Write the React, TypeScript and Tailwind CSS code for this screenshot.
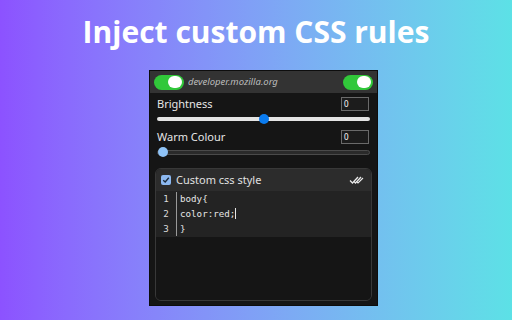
import React from "react";

function Toggle() {
  return (
    <div className="w-[30px] h-[15px] rounded-full bg-[#31c83a] flex items-center justify-end pr-[2px]">
      <div className="w-[14px] h-[12px] rounded-full bg-white" />
    </div>
  );
}

export default function App() {
  const ui = { fontFamily: '"Noto Sans", "DejaVu Sans", sans-serif' };
  const mono = { fontFamily: '"DejaVu Sans Mono", monospace' };
  return (
    <div className="w-[512px] h-[320px] bg-gradient-to-r from-[#8c52ff] to-[#5ce1e6] flex flex-col items-center overflow-hidden">
      <div
        className="mt-[12px] text-white font-bold text-[30px] leading-[40px]"
        style={{ fontFamily: '"Open Sans", Lato, sans-serif' }}
      >
        Inject custom CSS rules
      </div>
      <div
        className="mt-[18px] self-start ml-[149px] w-[229px] h-[236px] bg-[#151515] border border-[#0d0d0d] flex flex-col"
        style={ui}
      >
        <div className="h-[22px] bg-[#333333] flex items-center px-[4px]">
          <Toggle />
          <span className="ml-[4px] text-[9.5px] italic text-[#bdbdbd] flex-1">developer.mozilla.org</span>
          <Toggle />
        </div>
        <div className="px-[7px] pt-[4px] flex flex-col">
          <div className="flex items-center justify-between h-[14px]">
            <span className="text-[11px] text-[#e6e6e6]">Brightness</span>
            <div className="w-[28px] h-[14px] border border-[#6a6a6a] bg-[#1c1c1c] text-[8px] text-white pl-[2px] leading-[12px] mr-[1px]">0</div>
          </div>
          <div className="relative h-[10px] mt-[3px] flex items-center">
            <div className="w-full h-[4px] rounded-full bg-[#e4e4e4]" />
            <div className="absolute left-[102px] top-0 w-[10px] h-[10px] rounded-full bg-[#0a7bef]" />
          </div>
          <div className="flex items-center justify-between h-[14px] mt-[6px]">
            <span className="text-[11px] text-[#e6e6e6]">Warm Colour</span>
            <div className="w-[28px] h-[14px] border border-[#6a6a6a] bg-[#1c1c1c] text-[8px] text-white pl-[2px] leading-[12px] mr-[1px]">0</div>
          </div>
          <div className="relative h-[10px] mt-[3px] flex items-center">
            <div className="w-full h-[5px] rounded-full bg-[#2a2a2a] border border-[#4a4a4a]" />
            <div className="absolute left-[1px] top-0 w-[10px] h-[10px] rounded-full bg-[#8fc3f7]" />
          </div>
        </div>
        <div className="mx-[5px] mt-[11px] h-[133px] rounded-[6px] border border-[#383838] bg-[#151515] overflow-hidden flex flex-col">
          <div className="h-[22px] bg-[#2c2c2c] flex items-center pl-[5px] pr-[5px]">
            <div className="w-[10px] h-[10px] rounded-[2px] bg-[#8cb8f0] flex items-center justify-center">
              <svg width="8" height="8" viewBox="0 0 8 8">
                <path d="M1.2 4.2 L3.2 6 L6.8 1.8" stroke="#1b2a3a" strokeWidth="1.4" fill="none" />
              </svg>
            </div>
            <span className="ml-[5px] text-[11px] text-[#e0e0e0] flex-1">Custom css style</span>
            <svg width="15" height="10" viewBox="0 0 15 10" className="mr-[2px]">
              <path d="M1 5.5 L3.5 8 L9 2" stroke="#e8e8e8" strokeWidth="1.3" fill="none" />
              <path d="M5 6.5 L6.5 8 L12 2" stroke="#e8e8e8" strokeWidth="1.3" fill="none" />
              <path d="M8 7 L9 8 L14 3" stroke="#e8e8e8" strokeWidth="1.1" fill="none" />
            </svg>
          </div>
          <div className="h-[46px] bg-[#232323] flex" style={mono}>
            <div className="w-[20px] flex flex-col items-center text-[9.2px] leading-[15px] text-[#dcdcdc]">
              <span>1</span>
              <span>2</span>
              <span>3</span>
            </div>
            <div className="w-[1px] bg-[#9a9a9a] my-[1px]" />
            <div className="pl-[3px] flex flex-col text-[9.2px] leading-[15px] text-[#e6e6e6]">
              <span>body{"{"}</span>
              <span className="flex items-center">color:red;<span className="inline-block w-[1px] h-[11px] bg-[#e6e6e6]" /></span>
              <span>{"}"}</span>
            </div>
          </div>
          <div className="flex-1 bg-[#151515]" />
        </div>
      </div>
    </div>
  );
}
